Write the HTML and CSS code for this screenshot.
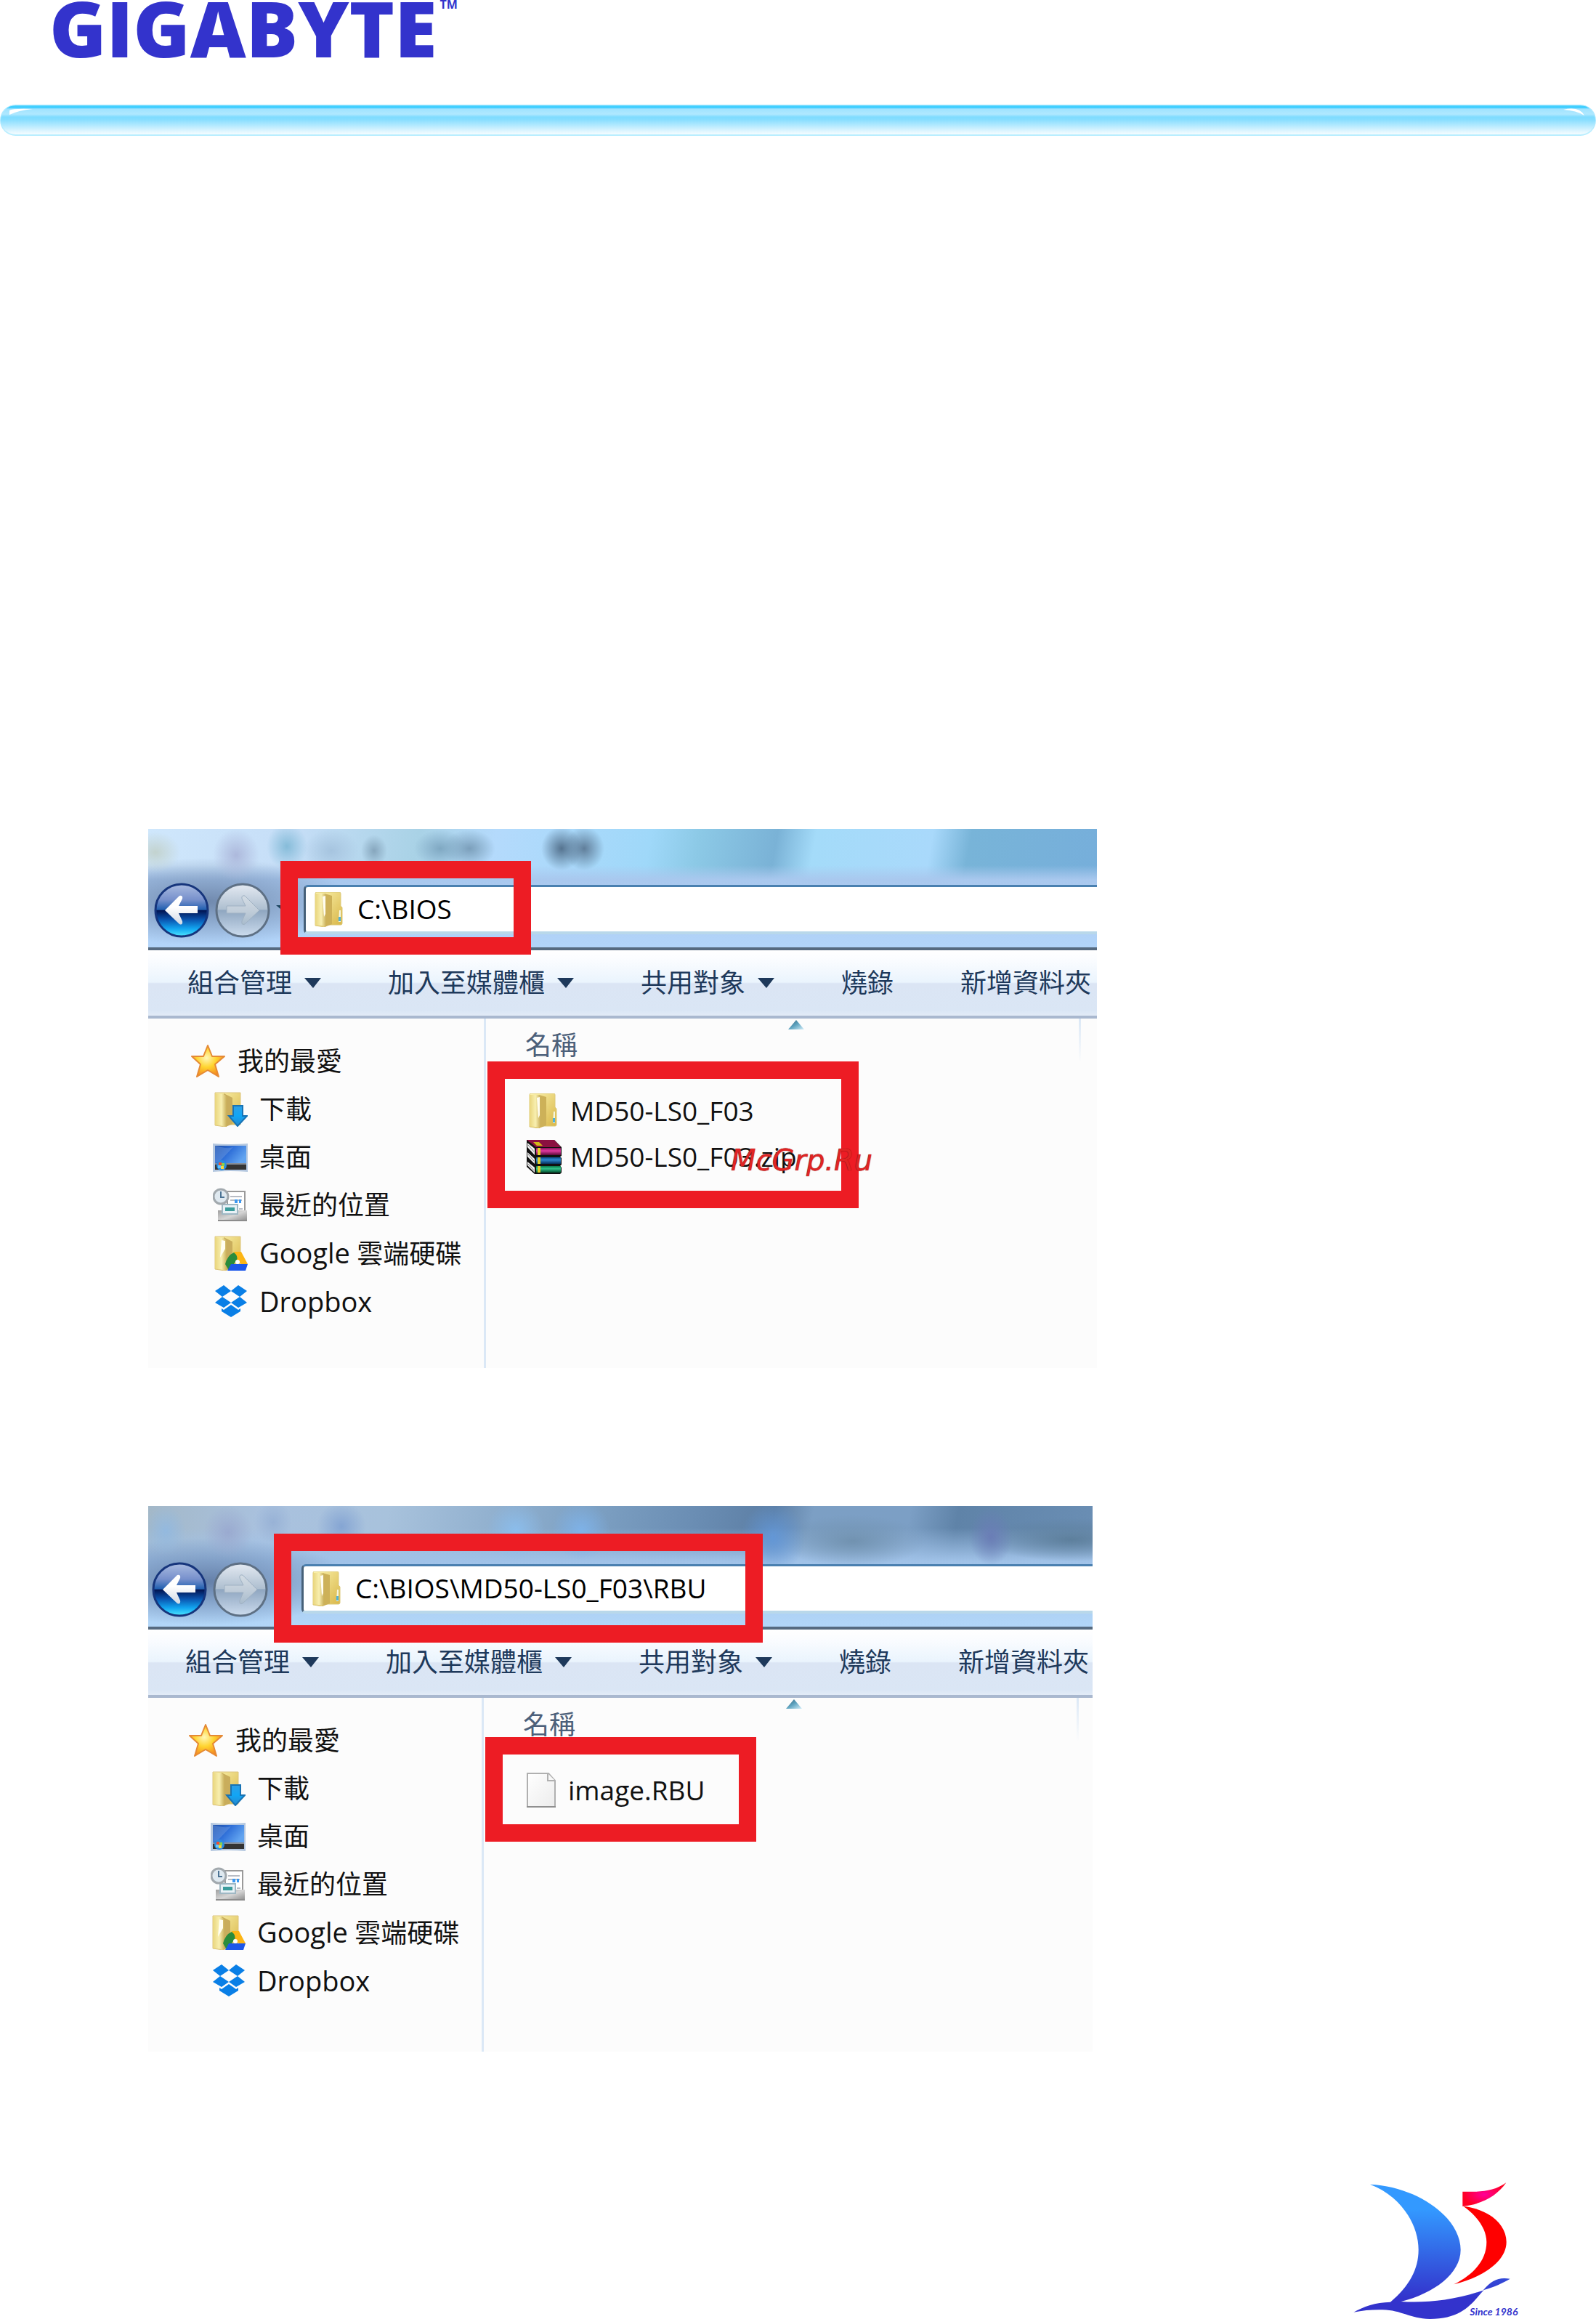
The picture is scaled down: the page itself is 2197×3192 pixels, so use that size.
FILE: index.html
```html
<!DOCTYPE html>
<html lang="zh-Hant">
<head>
<meta charset="utf-8">
<meta name="viewport" content="width=device-width, initial-scale=1">
<title>GIGABYTE BIOS</title>
<link rel="stylesheet" href="styles.css">
</head>
<body>
<svg class="sprite" width="0" height="0" aria-hidden="true">
  <defs>
    <linearGradient id="gFront" x1="0" x2="1"><stop offset="0" stop-color="#e9d57c"/><stop offset=".55" stop-color="#f8efb0"/><stop offset="1" stop-color="#c9ae58"/></linearGradient>
    <linearGradient id="gBack" x1="0" x2="1" y1="0" y2="1"><stop offset="0" stop-color="#fbf3ae"/><stop offset="1" stop-color="#d8b546"/></linearGradient>
    <linearGradient id="gArrow" x2="0" y2="1"><stop offset="0" stop-color="#2f9fe6"/><stop offset=".5" stop-color="#11a6f5"/><stop offset="1" stop-color="#2787cc"/></linearGradient>
    <radialGradient id="gStar" cx=".45" cy=".4" r=".6"><stop offset="0" stop-color="#fff7b8"/><stop offset=".5" stop-color="#ffd42f"/><stop offset="1" stop-color="#f58a1f"/></radialGradient>
    <linearGradient id="gDesk" x1="0" y1="0" x2="1" y2=".5"><stop offset="0" stop-color="#1d4da6"/><stop offset=".5" stop-color="#2f6fd8"/><stop offset="1" stop-color="#62a4f0"/></linearGradient>
    <linearGradient id="gTray" x2="1" y2="1"><stop offset="0" stop-color="#a0a0a0"/><stop offset=".5" stop-color="#d5d5d5"/><stop offset="1" stop-color="#8a8a8a"/></linearGradient>
    <linearGradient id="gSheet" x2="1" y2="1"><stop offset="0" stop-color="#ffffff"/><stop offset="1" stop-color="#ececec"/></linearGradient>
    <linearGradient id="gRed" x2="0" y2="1"><stop offset="0" stop-color="#8a0f55"/><stop offset=".4" stop-color="#e03aa0"/><stop offset="1" stop-color="#5a0838"/></linearGradient>
    <linearGradient id="gBlue" x2="0" y2="1"><stop offset="0" stop-color="#0c4f8c"/><stop offset=".4" stop-color="#2c86cc"/><stop offset="1" stop-color="#06305c"/></linearGradient>
    <linearGradient id="gGreen" x2="0" y2="1"><stop offset="0" stop-color="#0b7a4a"/><stop offset=".4" stop-color="#2fc088"/><stop offset="1" stop-color="#045030"/></linearGradient>
    <linearGradient id="gSort" x2="1" y2="1"><stop offset="0" stop-color="#2f5f78"/><stop offset=".5" stop-color="#5fa4c0"/><stop offset="1" stop-color="#d4effa"/></linearGradient>
    <linearGradient id="gSail" x2="0" y1="70" y2="636" gradientUnits="userSpaceOnUse"><stop offset="0" stop-color="#3399ff"/><stop offset=".2" stop-color="#3399ff"/><stop offset=".85" stop-color="#3333cc"/></linearGradient>
    <radialGradient id="gFlag" cx=".5" cy=".5" r=".5"><stop offset="0" stop-color="#ff0099"/><stop offset="1" stop-color="#ff0022"/></radialGradient>
    <linearGradient id="gOrb" x2="0" y2="1"><stop offset="0" stop-color="#a9bbe0"/><stop offset=".3" stop-color="#7790cc"/><stop offset=".49" stop-color="#1f5fb0"/><stop offset=".5" stop-color="#02124f"/><stop offset=".68" stop-color="#0a55b0"/><stop offset=".85" stop-color="#12a5f0"/><stop offset="1" stop-color="#4ee8ff"/></linearGradient>
    <linearGradient id="gOrbOff" x2="0" y2="1"><stop offset="0" stop-color="#e4eaf2"/><stop offset=".48" stop-color="#aebfd0"/><stop offset=".5" stop-color="#8fa6c0"/><stop offset="1" stop-color="#ccdcee"/></linearGradient>
    <linearGradient id="gHead" x2="0" y2="1"><stop offset=".4" stop-color="#ffffff"/><stop offset="1" stop-color="#d0d8e4"/></linearGradient>
    <linearGradient id="gHeadOff" x2="0" y2="1"><stop offset="0" stop-color="#d3dce4"/><stop offset=".5" stop-color="#c2ceda"/><stop offset="1" stop-color="#a9bccd"/></linearGradient>
  </defs>
  <symbol id="folder" viewBox="0 0 48 48">
    <path d="M4 2Q4 0 6 0H37Q39 0 39 2V19L41 21V43Q41 45 39 45H20L17 48L4 46Z" fill="url(#gBack)" stroke="#dcc878"/>
    <path d="M17 2L27 5V44L17 48Z" fill="#cdb158"/>
    <path d="M4 2L17 2Q19 2 19 5V47L4 45Z" fill="url(#gFront)"/>
    <path d="M14 6L18 5V30L16 34Z" fill="#fffdf0"/>
    <path d="M37 25h2v16h-3z" fill="#f5f6e0"/><path d="M36 34h3v6h-3z" fill="#4fb2d8"/>
  </symbol>
  <symbol id="openfolder" viewBox="0 0 48 48">
    <path d="M3 1H38V45H19L17 48L3 46Z" fill="url(#gBack)" stroke="#dcc47c"/>
    <path d="M15 2L27 8V44L18 48Z" fill="#c9ad5c"/>
    <path d="M3 2L14 3Q18 4 19 7V48L3 45Z" fill="url(#gFront)"/>
  </symbol>
  <symbol id="download" viewBox="0 0 48 48">
    <use href="#openfolder"/>
    <path d="M28 19H41V33H47L34 47L22 33H28Z" fill="url(#gArrow)" stroke="#1873b4" stroke-width="2"/>
  </symbol>
  <symbol id="star" viewBox="0 0 48 48">
    <path d="M23 2L29 17L46 17L33 28L38 45L23 36L8 45L13 28L1 17L17 17Z" fill="url(#gStar)" stroke="#e58a36" stroke-width="2" stroke-linejoin="round"/>
  </symbol>
  <symbol id="desktop" viewBox="0 0 48 48">
    <path d="M0 5Q24 7 48 5V44Q24 42 0 44Z" fill="#b5c8e0"/>
    <path d="M3 8H46V33H3Z" fill="url(#gDesk)"/>
    <path d="M3 8Q20 13 28 10L10 29L3 32Z" fill="#6f9be0" opacity=".45"/>
    <path d="M3 33H46V41H3Z" fill="#343434"/><path d="M3 32H46V34H3Z" fill="#858d98"/>
    <circle cx="12" cy="35" r="7" fill="#2b8de0"/>
    <path d="M8 31h4v4h-4z" fill="#ee4d35"/><path d="M12 32h4v4h-4z" fill="#8bd24b"/><path d="M7 35h4v4h-4z" fill="#5fc6ff"/><path d="M11 36h4v4h-4z" fill="#ffd83a"/>
  </symbol>
  <symbol id="recent" viewBox="0 0 48 48">
    <path d="M20 5H44V36H20Z" fill="#fff" stroke="#9a9a9a" stroke-width="2"/>
    <path d="M24 12H40M24 17H40M36 29h5" stroke="#b8bcc4" stroke-width="2"/>
    <path d="M30 16h4v5h-4zM36 16h3v5h-3z" fill="#3c98f0"/>
    <path d="M7 31H47V46H7Z" fill="url(#gTray)"/><path d="M7 45H47" stroke="#8c8c8c" stroke-width="2"/>
    <path d="M13 23H34V36H13Z" fill="#e8f1f6" stroke="#9fb8c4" stroke-width="2"/>
    <path d="M17 27H30V32H17Z" fill="#3c9c9c"/>
    <circle cx="11" cy="12" r="10" fill="#dfe9f0" stroke="#a2a9ae" stroke-width="3"/>
    <path d="M11 5V13H16" fill="none" stroke="#4b7394" stroke-width="2"/>
  </symbol>
  <symbol id="gdrive" viewBox="0 0 48 48">
    <use href="#openfolder"/><path d="M12 6L17 7V18L10 30Z" fill="#fffef0"/>
    <path d="M29 22H39L48 39H39L33 33Z" fill="#fcb515"/>
    <path d="M29 23Q35 28 33 33L24 46H21L17 39Q20 27 29 23Z" fill="#2a8c3c"/>
    <path d="M25 39H48L45 48H20Z" fill="#1c57ea"/>
    <circle cx="34" cy="36" r="3" fill="#fff"/>
  </symbol>
  <symbol id="dropbox" viewBox="0 0 48 48">
    <path d="M15 2L25 10L13 18L3 10ZM35 2L47 10L37 18L25 10ZM13 18L25 26L15 33L3 26ZM37 18L47 26L35 33L25 26ZM25 29L35 36L38 34V38L25 46L12 38V34L15 36Z" fill="#0a7fe6"/>
  </symbol>
  <symbol id="archive" viewBox="0 0 48 48">
    <path d="M0 1H38L48 11V23L46 24L48 26V35L46 37L48 39V46L46 48H11L0 38Z" fill="#111"/>
    <path d="M0 1H38L47 11H13Z" fill="#8b1040"/><path d="M9 4h8l5 5h-8z" fill="#d3b917"/>
    <path d="M1 5L11 13V22L1 11ZM1 18L11 27V34L1 24ZM1 31L11 39V46L1 36Z" fill="#f2f2f2"/>
    <path d="M2 8L10 17M2 21L10 30M2 34L10 43" stroke="#777" stroke-width="1"/>
    <path d="M13 12H47V22H13Z" fill="url(#gRed)"/><path d="M13 25H47V34H13Z" fill="url(#gBlue)"/><path d="M13 37H47V46H13Z" fill="url(#gGreen)"/>
    <path d="M15 12h4v10h-4zM15 25h4v9h-4zM15 37h4v9h-4z" fill="#e2cf2a"/>
  </symbol>
  <symbol id="file" viewBox="0 0 48 48">
    <path d="M4 1H33L42 11V47H4Z" fill="url(#gSheet)" stroke="#b0b0b0" stroke-width="2"/>
    <path d="M32 1V11H42" fill="#f8f8f8" stroke="#b0b0b0" stroke-width="2"/>
    <path d="M3 47H43" stroke="#8f8f8f" stroke-width="2"/>
  </symbol>
  <symbol id="down" viewBox="0 0 23 14"><path d="M0 0H23L12 14Z" fill="#1e395b"/></symbol>
  <symbol id="sort" viewBox="0 0 22 13"><path d="M11 0L22 13H0Z" fill="url(#gSort)"/></symbol>
  <symbol id="back" viewBox="0 0 76 76">
    <circle cx="38" cy="38" r="36" fill="url(#gOrb)" stroke="#16357c" stroke-width="3"/>
    <path d="M15 38L35 18Q40 17 39 22L34 32H60V42H34L39 53Q40 59 35 57Z" fill="url(#gHead)"/>
  </symbol>
  <symbol id="forward" viewBox="0 0 76 76">
    <circle cx="38" cy="38" r="36" fill="url(#gOrbOff)" stroke="#5e7084" stroke-width="3"/>
    <path d="M61 38L41 18Q36 17 37 22L42 32H16V42H42L37 53Q36 59 41 57Z" fill="url(#gHeadOff)" stroke="#9fb1c3"/>
  </symbol>
</svg>

<header class="masthead">
  <div class="brand">GIGABYTE<span class="tm">TM</span></div>
  <div class="bar">
    <svg width="32" height="10" viewBox="0 0 32 10" aria-hidden="true"><path d="M0 9V3Q4 0 32 1Q12 3 0 9Z" fill="#fff"/></svg>
    <svg width="32" height="10" viewBox="0 0 32 10" aria-hidden="true"><path d="M29 10Q18 3 0 2Q22 -3 29 10Z" fill="#fff"/></svg>
  </div>
</header>

<main class="shots">
  <section class="window">
    <div class="glass glass-light">
      <div class="nav">
        <button class="orb" aria-label="Back"><svg><use href="#back"/></svg></button>
        <button class="orb" aria-label="Forward"><svg><use href="#forward"/></svg></button>
        <span class="chevron"></span>
        <label class="address"><svg class="icon"><use href="#folder"/></svg><input type="text" value="C:\BIOS" aria-label="Address"></label>
      </div>
    </div>
    <div class="toolbar">
      <button>組合管理<svg><use href="#down"/></svg></button>
      <button>加入至媒體櫃<svg><use href="#down"/></svg></button>
      <button>共用對象<svg><use href="#down"/></svg></button>
      <button>燒錄</button>
      <button>新增資料夾</button>
    </div>
    <div class="content">
      <nav class="places">
        <a class="root" href="#favorites"><svg class="icon"><use href="#star"/></svg>我的最愛</a>
        <a href="#downloads"><svg class="icon"><use href="#download"/></svg>下載</a>
        <a href="#desktop-place"><svg class="icon"><use href="#desktop"/></svg>桌面</a>
        <a href="#recent-places"><svg class="icon"><use href="#recent"/></svg>最近的位置</a>
        <a href="#google-drive"><svg class="icon"><use href="#gdrive"/></svg><span><span class="latin">Google</span> 雲端硬碟</span></a>
        <a href="#dropbox-place"><svg class="icon"><use href="#dropbox"/></svg><span class="latin">Dropbox</span></a>
      </nav>
      <div class="pane">
        <svg class="sort" aria-hidden="true"><use href="#sort"/></svg>
        <table class="files">
          <thead><tr><th class="name" scope="col">名稱</th><td class="next"></td></tr></thead>
          <tbody>
            <tr><td><div class="entry"><svg class="icon"><use href="#folder"/></svg>MD50-LS0_F03</div></td><td></td></tr>
            <tr><td><div class="entry"><svg class="icon"><use href="#archive"/></svg>MD50-LS0_F03.zip</div></td><td></td></tr>
          </tbody>
        </table>
      </div>
    </div>
    <div class="mark mark-path"></div>
    <div class="mark mark-files"></div>
    <div class="watermark">McGrp.Ru</div>
  </section>

  <section class="window window-cropped">
    <div class="glass glass-dark">
      <div class="nav">
        <button class="orb" aria-label="Back"><svg><use href="#back"/></svg></button>
        <button class="orb" aria-label="Forward"><svg><use href="#forward"/></svg></button>
        <span class="chevron"></span>
        <label class="address"><svg class="icon"><use href="#folder"/></svg><input type="text" value="C:\BIOS\MD50-LS0_F03\RBU" aria-label="Address"></label>
      </div>
    </div>
    <div class="toolbar">
      <button>組合管理<svg><use href="#down"/></svg></button>
      <button>加入至媒體櫃<svg><use href="#down"/></svg></button>
      <button>共用對象<svg><use href="#down"/></svg></button>
      <button>燒錄</button>
      <button>新增資料夾</button>
    </div>
    <div class="content">
      <nav class="places">
        <a class="root" href="#favorites"><svg class="icon"><use href="#star"/></svg>我的最愛</a>
        <a href="#downloads"><svg class="icon"><use href="#download"/></svg>下載</a>
        <a href="#desktop-place"><svg class="icon"><use href="#desktop"/></svg>桌面</a>
        <a href="#recent-places"><svg class="icon"><use href="#recent"/></svg>最近的位置</a>
        <a href="#google-drive"><svg class="icon"><use href="#gdrive"/></svg><span><span class="latin">Google</span> 雲端硬碟</span></a>
        <a href="#dropbox-place"><svg class="icon"><use href="#dropbox"/></svg><span class="latin">Dropbox</span></a>
      </nav>
      <div class="pane">
        <svg class="sort" aria-hidden="true"><use href="#sort"/></svg>
        <table class="files">
          <thead><tr><th class="name" scope="col">名稱</th><td class="next"></td></tr></thead>
          <tbody>
            <tr><td><div class="entry"><svg class="icon"><use href="#file"/></svg>image.RBU</div></td><td></td></tr>
          </tbody>
        </table>
      </div>
    </div>
    <div class="mark mark-path"></div>
    <div class="mark mark-files"></div>
  </section>
</main>

<footer class="foot">
  <svg class="sail" viewBox="0 0 840 636" role="img" aria-label="25, Since 1986">
    <path d="M138 80C340 90 512 220 512 350C512 450 400 530 266 564C370 570 480 560 604 518C640 475 670 462 716 470C690 485 650 505 608 516C560 570 520 636 385 636C300 634 270 600 190 598C150 597 110 600 70 608C110 585 160 567 222 566C300 500 338 430 338 350C338 250 270 130 138 80Z" fill="url(#gSail)"/>
    <path d="M520 110C590 112 650 110 700 73C660 130 600 162 520 171Z" fill="url(#gFlag)"/>
    <path d="M524 171C620 180 701 240 701 318C701 400 600 465 484 493C570 450 619 390 619 318C619 265 580 210 524 171Z" fill="#ff0000"/>
    <text class="since" x="550" y="621">Since 1986</text>
  </svg>
</footer>
</body>
</html>
```
FILE: styles.css
```css
* { box-sizing: border-box; }

body {
  margin: 0;
  background: #fff;
  color: #111;
  font-family: "Open Sans", "Noto Sans CJK TC", sans-serif;
  font-size: 36px;
  line-height: 48px;
}

button, input {
  margin: 0;
  padding: 0;
  border: 0;
  background: none;
  color: inherit;
  font: inherit;
}

svg { display: block; flex: none; }
.sprite { position: absolute; }
.icon { width: 48px; height: 48px; }

/* Masthead */
.masthead { height: 187px; display: flex; flex-direction: column; justify-content: space-between; }

.brand {
  display: flex;
  align-items: flex-start;
  gap: 4px;
  padding-left: 68px;
  height: 104px;
  color: #3333cc;
  font-weight: 800;
  font-size: 106px;
  line-height: 76px;
}
.tm { font-size: 16px; line-height: 12px; font-weight: 700; }

.bar {
  display: flex;
  justify-content: space-between;
  padding: 4px 12px;
  height: 43px;
  border: 1px solid #b0eaff;
  border-bottom: 2px solid #b8eeff;
  border-radius: 22px;
  background: linear-gradient(#6fdaff 0, #33ccff 2px, #3cccff 3px, #9fe3ff 5px, #b0e8ff 12px, #a5e5ff 13px, #7fdcff 16px, #84ddff 19px, #b5eaff 28px, #ecf9ff 38px, #f5fcff 40px);
}

/* Explorer windows */
.shots {
  display: flex;
  flex-direction: column;
  gap: 190px;
  padding: 954px 80px 0 204px;
}

.window {
  position: relative;
  width: 100%;
  max-width: 1306px;
  background: #fcfcfc;
}
.window-cropped { max-width: 1300px; }

.glass { padding-top: 77px; border-bottom: 4px solid #566a80; }
.window-cropped .glass { padding-top: 80px; }

.glass-light {
  background:
    radial-gradient(ellipse 34px 28px at 10px 32px, #c3d3cf 0, #c3d3cf00 100%),
    radial-gradient(ellipse 32px 36px at 121px 36px, #adb9dc 0, #adb9dc00 100%),
    radial-gradient(ellipse 28px 32px at 191px 24px, #86bcd9 0, #86bcd900 100%),
    radial-gradient(ellipse 38px 30px at 252px 30px, #a6c4df 0, #a6c4df00 100%),
    radial-gradient(ellipse 18px 22px at 311px 30px, #86a6bd 0, #86a6bd00 100%),
    radial-gradient(ellipse 36px 26px at 402px 27px, #7fa8c2 0, #7fa8c200 100%),
    radial-gradient(ellipse 36px 26px at 442px 27px, #7b9fbb 0, #7b9fbb00 100%),
    radial-gradient(ellipse 28px 30px at 569px 27px, #55738f 0, #55738f00 100%),
    radial-gradient(ellipse 28px 30px at 600px 27px, #607e9a 0, #607e9a00 100%),
    radial-gradient(ellipse 200px 60px at 80px 100px, #7089ad 0, #7089ad00 100%),
    linear-gradient(#fff0 50px, #a9c8ee 70px, #b2d4f9 160px),
    linear-gradient(100deg, #cfe7fc 0, #c6def7 15%, #a9d2e6 28%, #b4dafc 36%, #9fd8f9 52%, #8cc9e6 57%, #7ab2d6 65%, #a4dbf9 69%, #a9d9fb 81%, #78b4d8 85%, #76aedb 100%);
}

.glass-dark {
  background:
    radial-gradient(ellipse 28px 34px at 24px 34px, #93b9df 0, #93b9df00 100%),
    radial-gradient(ellipse 34px 36px at 110px 36px, #9aaad0 0, #9aaad000 100%),
    radial-gradient(ellipse 26px 30px at 172px 22px, #98b2d6 0, #98b2d600 100%),
    radial-gradient(ellipse 34px 34px at 266px 28px, #85a5d3 0, #85a5d300 100%),
    radial-gradient(ellipse 40px 40px at 506px 34px, #8bbdec 0, #8bbdec00 100%),
    radial-gradient(ellipse 40px 40px at 596px 34px, #7eb2e8 0, #7eb2e800 100%),
    radial-gradient(ellipse 44px 50px at 860px 44px, #6397d6 0, #6397d600 100%),
    radial-gradient(ellipse 100px 36px at 970px 48px, #7192b0 0, #7192b000 100%),
    radial-gradient(ellipse 30px 40px at 1160px 42px, #6a7db6 0, #6a7db600 100%),
    radial-gradient(ellipse 120px 30px at 1270px 46px, #5d7f9c 0, #5d7f9c00 100%),
    radial-gradient(ellipse 200px 60px at 80px 104px, #647fa8 0, #647fa800 100%),
    linear-gradient(#fff0 30px, #a0c2e8 76px, #b2d6f8 164px),
    linear-gradient(100deg, #a3b8c8 0, #a9c1de 12%, #a8c2dc 25%, #7fa2c4 45%, #6a8db3 57%, #5c7ea4 65%, #7c9fc4 69%, #7c9fc5 79%, #5f83a8 84%, #6b8fb5 100%);
}

.nav {
  display: flex;
  align-items: flex-start;
  height: 86px;
  padding-left: 8px;
}
.window-cropped .nav { padding-left: 5px; }

.orb { width: 76px; height: 76px; margin: -3px 8px 0 0; border-radius: 50%; }
.orb svg { width: 76px; height: 76px; }

.chevron {
  margin: 28px 14px 0 0;
  border: 12px solid transparent;
  border-top: 10px solid #1b4560;
  border-bottom: 0;
}

.address {
  flex: 1;
  min-width: 0;
  display: flex;
  align-items: center;
  gap: 14px;
  height: 68px;
  padding-left: 9px;
  border-top: 3px solid #4a80b0;
  border-bottom: 4px solid #b9d8ea;
  border-left: 3px solid #466078;
  border-radius: 6px 0 0 6px;
  background: #fff;
}
.address input { flex: 1; min-width: 0; height: 56px; padding-bottom: 3px; color: #000; font-size: 37px; }

.toolbar {
  display: flex;
  align-items: center;
  gap: 92px;
  height: 94px;
  padding-left: 54px;
  overflow: hidden;
  border-bottom: 4px solid #a9b8cf;
  background: linear-gradient(#fff 0, #fafcff 16%, #eaf4fd 49%, #dbe5f4 51%, #dae6f5 92%, #e2ebf7 100%);
  color: #1e395b;
}
.window-cropped .toolbar { padding-left: 51px; }
.toolbar button { display: flex; flex: none; align-items: center; gap: 17px; white-space: nowrap; }
.toolbar svg { width: 23px; height: 14px; }

.content { display: flex; min-height: 481px; }
.window-cropped .content { min-height: 487px; }

.places {
  flex: none;
  width: 465px;
  padding: 26px 0 0 89px;
  border-right: 3px solid #dbe8f6;
}
.window-cropped .places { width: 462px; padding-left: 86px; }
.places a {
  display: flex;
  align-items: center;
  gap: 16px;
  height: 66px;
  color: inherit;
  text-decoration: none;
  white-space: nowrap;
}
.places .root { margin-left: -30px; }
.latin { font-size: 38px; }

.pane { position: relative; flex: 1; min-width: 0; }
.sort { position: absolute; left: 416px; top: 2px; width: 22px; height: 13px; }

.files { width: 100%; table-layout: fixed; border-collapse: collapse; }
.files td, .files th { padding: 0; text-align: left; font-weight: 400; vertical-align: top; }
.files .name { width: 816px; height: 95px; padding-left: 54px; color: #4c607a; line-height: 74px; }
.files .next { background: linear-gradient(#dbe8f6, #dbe8f600) no-repeat 0 0 / 3px 60px; }
.entry {
  display: flex;
  align-items: center;
  gap: 12px;
  height: 63px;
  padding-left: 56px;
  font-size: 37px;
  white-space: nowrap;
}

/* Annotations laid over the windows */
.mark { position: absolute; border: 24px solid #ed1c24; pointer-events: none; }
.mark-path { left: 182px; top: 44px; width: 345px; height: 129px; }
.mark-files { left: 467px; top: 320px; width: 511px; height: 202px; }
.window-cropped .mark-path { left: 173px; top: 38px; width: 673px; height: 150px; }
.window-cropped .mark-files { left: 464px; top: 318px; width: 373px; height: 144px; }

.watermark {
  position: absolute;
  left: 802px;
  top: 432px;
  color: #e02424;
  font-family: "DejaVu Sans", sans-serif;
  font-size: 40px;
  font-style: italic;
  text-shadow: 0 0 1px #5a0a0a;
}

/* Footer */
.foot { display: flex; justify-content: flex-end; padding: 156px 77px 0 0; }
.sail { width: 280px; height: 212px; }
.since { fill: #3333cc; font: italic 700 42px Lato, sans-serif; }
```
